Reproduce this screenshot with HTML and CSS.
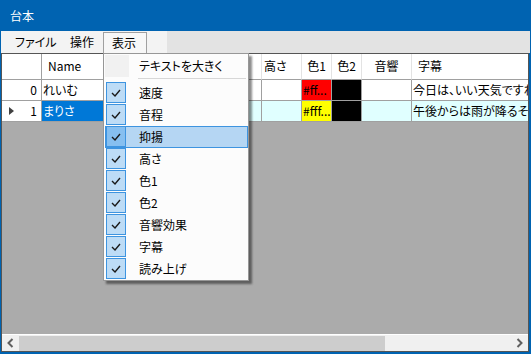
FILE: index.html
```html
<!DOCTYPE html>
<html lang="ja">
<head>
  <meta charset="UTF-8">
  <title>台本</title>
  <link rel="stylesheet" href="styles.css">
</head>
<body>

<div class="window">
  <div class="titlebar">台本</div>

  <div class="menubar">
    <div class="menu-items">
      <span class="menu-item file">ファイル</span>
      <span class="menu-item ops">操作</span>
      <span class="menu-item open">表示</span>
    </div>
  </div>

  <div class="grid">
    <div class="grid-body">
      <!-- header row (columns under the open menu are covered) -->
      <div class="row header">
        <div class="cell c-rh"></div>
        <div class="cell c-name">Name</div>
        <div class="cell c-speed"></div>
        <div class="cell c-pitch"></div>
        <div class="cell c-into"></div>
        <div class="cell c-high">高さ</div>
        <div class="cell c-col center">色1</div>
        <div class="cell c-col center">色2</div>
        <div class="cell c-snd center">音響</div>
        <div class="cell c-sub">字幕</div>
      </div>

      <div class="row">
        <div class="cell c-rh num">0</div>
        <div class="cell c-name">れいむ</div>
        <div class="cell c-speed"></div>
        <div class="cell c-pitch"></div>
        <div class="cell c-into"></div>
        <div class="cell c-high"></div>
        <div class="cell c-col red">#ff...</div>
        <div class="cell c-col black"></div>
        <div class="cell c-snd"></div>
        <div class="cell c-sub">今日は、いい天気ですね</div>
      </div>

      <div class="row alt">
        <div class="cell c-rh num"><span class="current"></span>1</div>
        <div class="cell c-name selected">まりさ</div>
        <div class="cell c-speed"></div>
        <div class="cell c-pitch"></div>
        <div class="cell c-into"></div>
        <div class="cell c-high"></div>
        <div class="cell c-col yellow">#fff...</div>
        <div class="cell c-col black"></div>
        <div class="cell c-snd"></div>
        <div class="cell c-sub">午後からは雨が降るそう...</div>
      </div>
    </div>

    <div class="hscroll">
      <svg class="arrow" width="8" height="10" viewBox="0 0 8 10"><polyline points="6,1 2,5 6,9" fill="none" stroke="#606060" stroke-width="2"/></svg>
      <div class="track"><div class="thumb"></div></div>
      <svg class="arrow" width="8" height="10" viewBox="0 0 8 10"><polyline points="2,1 6,5 2,9" fill="none" stroke="#606060" stroke-width="2"/></svg>
    </div>
  </div>

  <!-- 表示 dropdown -->
  <div class="dropdown">
    <div class="dd-item plain"><span class="dd-text">テキストを大きく</span></div>
    <div class="dd-sep"></div>
    <div class="dd-item"><span class="check"><svg width="10" height="8" viewBox="0 0 10 8"><polyline points="1,4 4,7 9,1" fill="none" stroke="#1a1a1a" stroke-width="1.4"/></svg></span><span class="dd-text">速度</span></div>
    <div class="dd-item"><span class="check"><svg width="10" height="8" viewBox="0 0 10 8"><polyline points="1,4 4,7 9,1" fill="none" stroke="#1a1a1a" stroke-width="1.4"/></svg></span><span class="dd-text">音程</span></div>
    <div class="dd-item hover"><span class="check"><svg width="10" height="8" viewBox="0 0 10 8"><polyline points="1,4 4,7 9,1" fill="none" stroke="#1a1a1a" stroke-width="1.4"/></svg></span><span class="dd-text">抑揚</span></div>
    <div class="dd-item"><span class="check"><svg width="10" height="8" viewBox="0 0 10 8"><polyline points="1,4 4,7 9,1" fill="none" stroke="#1a1a1a" stroke-width="1.4"/></svg></span><span class="dd-text">高さ</span></div>
    <div class="dd-item"><span class="check"><svg width="10" height="8" viewBox="0 0 10 8"><polyline points="1,4 4,7 9,1" fill="none" stroke="#1a1a1a" stroke-width="1.4"/></svg></span><span class="dd-text">色1</span></div>
    <div class="dd-item"><span class="check"><svg width="10" height="8" viewBox="0 0 10 8"><polyline points="1,4 4,7 9,1" fill="none" stroke="#1a1a1a" stroke-width="1.4"/></svg></span><span class="dd-text">色2</span></div>
    <div class="dd-item"><span class="check"><svg width="10" height="8" viewBox="0 0 10 8"><polyline points="1,4 4,7 9,1" fill="none" stroke="#1a1a1a" stroke-width="1.4"/></svg></span><span class="dd-text">音響効果</span></div>
    <div class="dd-item"><span class="check"><svg width="10" height="8" viewBox="0 0 10 8"><polyline points="1,4 4,7 9,1" fill="none" stroke="#1a1a1a" stroke-width="1.4"/></svg></span><span class="dd-text">字幕</span></div>
    <div class="dd-item"><span class="check"><svg width="10" height="8" viewBox="0 0 10 8"><polyline points="1,4 4,7 9,1" fill="none" stroke="#1a1a1a" stroke-width="1.4"/></svg></span><span class="dd-text">読み上げ</span></div>
  </div>
</div>

</body>
</html>
```

FILE: styles.css
```css
/* Window */
body {
  margin: 0;
  padding: 0;
  font-family: "Noto Sans CJK JP", "Noto Sans", sans-serif;
  font-size: 12px;
  font-feature-settings: "palt";
  color: #000;
  background: #0063b1;
}
.window {
  position: relative;
  width: 531px;
  height: 354px;
  background: #0063b1;
  display: flex;
  flex-direction: column;
  overflow: hidden;
}
.titlebar {
  height: 31px;
  line-height: 31px;
  padding-left: 10px;
  color: #fff;
  flex-shrink: 0;
}

/* Menu bar */
.menubar {
  height: 22px;
  margin: 0 1px;
  background: #e3e3e3;
  flex-shrink: 0;
  display: flex;
}
.menu-items {
  width: 166px;
  height: 22px;
  background: #f3f3f3;
  display: flex;
  padding-left: 5px;
  box-sizing: border-box;
}
.menu-item {
  padding-left: 9px;
  line-height: 22px;
  box-sizing: border-box;
  height: 22px;
  white-space: nowrap;
  overflow: hidden;
}
.menu-item.file { width: 55px; }
.menu-item.ops { width: 42px; }
.menu-item.open {
  width: 44px;
  margin-top: 1px;
  line-height: 20px;
  padding-left: 8px;
  border: 1px solid #a0a0a0;
  border-bottom: none;
  background: #f7f7f7;
}

/* Data grid */
.grid {
  flex: 1;
  margin: 0 2px 2px 1px;
  border: 1px solid #555;
  background: #ababab;
  display: flex;
  flex-direction: column;
  min-height: 0;
}
.grid-body {
  flex: 1;
  overflow: hidden;
}
.row {
  display: flex;
  height: 21px;
  background: #fff;
}
.row.header {
  height: 26px;
}
.row.alt {
  background: #e0ffff;
}
.cell {
  box-sizing: border-box;
  flex-shrink: 0;
  border-right: 1px solid #a0a0a0;
  border-bottom: 1px solid #a0a0a0;
  line-height: 20px;
  padding: 0 1px;
  white-space: nowrap;
  overflow: hidden;
}
.header .cell {
  background: #fff;
  border-right-color: #e3e3e3;
  border-bottom-color: #a0a0a0;
  line-height: 24px;
  padding-left: 6px;
}
.header .cell.center {
  text-align: center;
  padding: 0;
}
.header .c-high {
  padding-left: 2px;
}
.c-rh { width: 40px; background: #fff; }
.header .c-rh { border-right-color: #a0a0a0; }
.c-name { width: 89px; }
.c-speed { width: 45px; }
.c-pitch { width: 45px; }
.c-into { width: 41px; }
.c-high { width: 40px; }
.c-col { width: 30px; }
.c-snd { width: 50px; }
.c-sub { width: 200px; border-right: none; }
.header .c-sub { padding-left: 6px; }

.num {
  position: relative;
  text-align: right;
  padding-right: 4px;
}
.current {
  position: absolute;
  left: 7px;
  top: 6px;
  width: 0;
  height: 0;
  border-top: 4px solid transparent;
  border-bottom: 4px solid transparent;
  border-left: 5px solid #404040;
}
.selected {
  background: #0078d7;
  color: #fff;
}
.red { background: #ff0000; }
.yellow { background: #ffff00; }
.black { background: #000; }

/* Horizontal scrollbar */
.hscroll {
  height: 17px;
  box-sizing: border-box;
  border-top: 1px solid #fff;
  background: #f0f0f0;
  display: flex;
  align-items: center;
  flex-shrink: 0;
}
.hscroll .arrow {
  width: 17px;
  flex-shrink: 0;
}
.track {
  flex: 1;
  height: 15px;
}
.thumb {
  width: 366px;
  height: 15px;
  background: #cdcdcd;
}

/* Dropdown */
.dropdown {
  position: absolute;
  left: 103px;
  top: 53px;
  width: 146px;
  height: 228px;
  box-sizing: border-box;
  border: 1px solid #979797;
  background: #fcfcfc;
  padding: 1px 0;
  box-shadow: 3px 3px 2px rgba(0, 0, 0, 0.45);
}
.dd-item {
  position: relative;
  height: 22px;
  line-height: 22px;
  box-sizing: border-box;
  margin: 0 0 0 1px;
}
.dd-item.plain {
  background: linear-gradient(to right, #f1f1f1 0, #f1f1f1 24px, transparent 24px);
}
.dd-item.hover {
  background: #b5d6f3;
  border: 1px solid #3d94e0;
}
.dd-text {
  position: absolute;
  left: 34px;
  top: 0;
}
.dd-item.hover .dd-text {
  left: 33px;
  top: -1px;
}
.check {
  position: absolute;
  left: 1px;
  top: 0;
  width: 20px;
  height: 21px;
  box-sizing: border-box;
  border: 1px solid #3d94e0;
  background: #bddcf6;
  display: flex;
  align-items: center;
  justify-content: center;
}
.dd-item.hover .check {
  left: 0;
  top: -1px;
  background: #86bff0;
}
.dd-sep {
  height: 4px;
  margin-left: 34px;
  margin-right: 2px;
  border-top: 1px solid #d7d7d7;
  margin-top: 1px;
  box-sizing: border-box;
}
```
